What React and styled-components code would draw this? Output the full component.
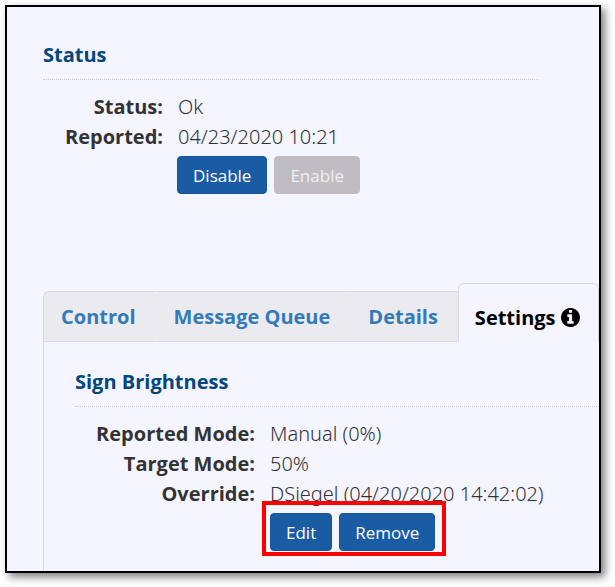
import React from "react";
import styled, { createGlobalStyle } from "styled-components";

const GlobalStyle = createGlobalStyle`
  * {
    box-sizing: border-box;
  }

  body {
    margin: 0;
    background-color: white;
    font-family: "Open Sans", "Noto Sans", sans-serif;
    font-size: 20px;
    line-height: 30px;
    color: #333333;
  }
`;

const InfoIcon = () => (
  <Icon viewBox="0 0 1536 1536" role="img" aria-label="Info">
    <path d="M1024 1248v-160q0-14-9-23t-23-9h-96v-512q0-14-9-23t-23-9h-320q-14 0-23 9t-9 23v160q0 14 9 23t23 9h96v320h-96q-14 0-23 9t-9 23v160q0 14 9 23t23 9h448q14 0 23-9t9-23zm-128-896v-160q0-14-9-23t-23-9h-192q-14 0-23 9t-9 23v160q0 14 9 23t23 9h192q14 0 23-9t9-23zm640 416q0 209-103 385.500t-279.500 279.500-385.500 103-385.500-103-279.500-279.500-103-385.500 103-385.500 279.500-279.500 385.500-103 385.500 103 279.500 279.500 103 385.500z" />
  </Icon>
);

const App = () => {
  return (
    <>
      <GlobalStyle />
      <Window>
        <StatusSection>
          <Title>Status</Title>
          <Details $labelWidth="120px">
            <dt>Status:</dt>
            <dd>Ok</dd>
            <dt>Reported:</dt>
            <dd>04/23/2020 10:21</dd>
          </Details>
          <Actions $indent="134px">
            <ButtonGroup>
              <Button type="button">Disable</Button>
              <Button type="button" disabled>Enable</Button>
            </ButtonGroup>
          </Actions>
        </StatusSection>

        <Tabs role="tablist">
          <Tab type="button" role="tab" aria-selected="false">Control</Tab>
          <Tab type="button" role="tab" aria-selected="false">Message Queue</Tab>
          <Tab type="button" role="tab" aria-selected="false">Details</Tab>
          <ActiveTab type="button" role="tab" aria-selected="true">
            Settings
            <InfoIcon />
          </ActiveTab>
        </Tabs>

        <Panel role="tabpanel">
          <Title>Sign Brightness</Title>
          <Details $labelWidth="180px">
            <dt>Reported Mode:</dt>
            <dd>Manual (0%)</dd>
            <dt>Target Mode:</dt>
            <dd>50%</dd>
            <dt>Override:</dt>
            <dd>DSiegel (04/20/2020 14:42:02)</dd>
          </Details>
          <Actions $indent="195px">
            <ButtonGroup $marked>
              <Button type="button">Edit</Button>
              <Button type="button">Remove</Button>
            </ButtonGroup>
          </Actions>
        </Panel>
      </Window>
    </>
  );
};

// WINDOW

const Window = styled.main`
  margin: 5px 14px 14px 5px;
  border: 2px solid black;
  background-color: #f5f5ff;
  box-shadow: 4px 4px 8px rgba(0, 0, 0, 0.5);
`;

const StatusSection = styled.section`
  margin: 0 60px 0 36px;
  padding-top: 33px;
`;

const Title = styled.h2`
  margin: 0;
  padding-bottom: 9px;
  border-bottom: 1px dotted #c8c8d4;
  color: #04477c;
  font-size: 20px;
  line-height: 30px;
  font-weight: 700;
`;

// LABELS AND VALUES

const Details = styled.dl`
  display: grid;
  grid-template-columns: ${({ $labelWidth }) => $labelWidth} 1fr;
  column-gap: 15px;
  margin: 12px 0 0;

  dt {
    font-weight: 700;
    text-align: right;
  }

  dd {
    margin: 0;
    font-family: "Noto Sans", "Open Sans", sans-serif;
    font-weight: 300;
    white-space: nowrap;
  }
`;

const Actions = styled.div`
  padding: 4px 0 0 ${({ $indent }) => $indent};
`;

const ButtonGroup = styled.div`
  position: relative;
  display: inline-flex;
  gap: 7px;
  vertical-align: top;

  &::after {
    content: "";
    display: ${({ $marked }) => ($marked ? "block" : "none")};
    position: absolute;
    inset: -12px -11px -5px -8px;
    border: 4px solid red;
    pointer-events: none;
  }
`;

const Button = styled.button`
  height: 38px;
  padding: 0 15px;
  border: 1px solid #14559c;
  border-radius: 4px;
  background-color: #195ca4;
  color: white;
  font-family: inherit;
  font-size: 17px;

  &:disabled {
    border-color: #bfbdc1;
    background-color: #bfbdc1;
    color: #f0eff5;
  }
`;

// TABS

const Tabs = styled.div`
  display: flex;
  align-items: flex-end;
  margin: 89px 0 0 36px;
`;

const Tab = styled.button`
  flex: none;
  height: 51px;
  padding: 0 19px 0 17px;
  border: 1px solid;
  border-color: #d8d8e0 #ebebef;
  background-color: #ebebef;
  color: #337ab7;
  font-family: inherit;
  font-size: 20px;
  font-weight: 700;

  &:first-child {
    border-left-color: #d8d8e0;
    border-top-left-radius: 6px;
  }
`;

const ActiveTab = styled(Tab)`
  display: flex;
  flex: 1;
  align-items: center;
  gap: 5px;
  height: 59px;
  padding: 8px 16px 0;
  border-color: #d8d8e0;
  border-bottom: 0;
  border-radius: 6px 6px 0 0;
  background-color: #f5f5ff;
  color: black;
`;

const Icon = styled.svg`
  flex: none;
  width: 19px;
  height: 19px;
  fill: currentColor;
`;

const Panel = styled.section`
  margin-left: 36px;
  padding: 25px 0 20px 31px;
  border-left: 1px solid #d8d8e0;
`;

export default App;
